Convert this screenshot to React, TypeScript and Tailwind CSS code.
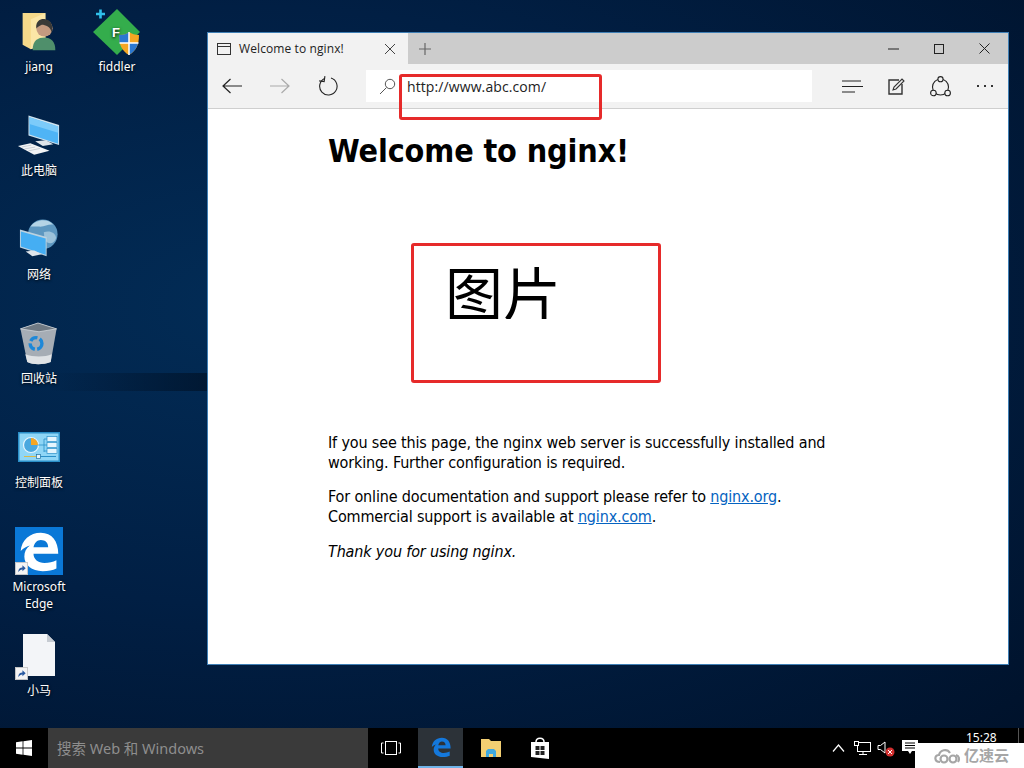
import React from 'react'

const FONT = "font-['Noto_Sans','Noto_Sans_CJK_SC',sans-serif]"

// Shortcut arrow badge used on Edge and 小马
const ShortcutBadge = () => (
  <svg width="13" height="13" viewBox="0 0 14 14" className="absolute left-0 bottom-0">
    <rect x="0.5" y="0.5" width="13" height="13" fill="#f4f4f4" stroke="#c8c8c8" />
    <path d="M3.5 11 C3.5 7.5 5.5 6 8 6 L8 3.5 L11.5 6.8 L8 10 L8 8 C6 8 5 9 3.5 11 Z" fill="#2a5aa0" />
  </svg>
)

const FolderUserIcon = () => (
  <svg width="36" height="40" viewBox="0 0 38 44">
    <path d="M1 1 H26 V34 L10 41 L1 36 Z" fill="#f5d98a" />
    <path d="M10 8 L26 1 V34 L10 41 Z" fill="#fbe6a6" />
    <path d="M12 42 C12 31 18 28 25 28 C32 28 37 32 37 42 Z" fill="#4f8f6b" />
    <circle cx="25" cy="18" r="9" fill="#c49a80" />
    <path d="M16 18 C15 8 23 7 26 8 C32 9 35 14 33 23 C32 16 26 14 22 14 C20 15 18 16 16 18 Z" fill="#3a3a38" />
  </svg>
)

const FiddlerIcon = () => (
  <svg width="50" height="48" viewBox="0 0 50 48">
    <path d="M4 6 H13 M8.5 1.5 V10.5" stroke="#2fc0ea" strokeWidth="2.6" />
    <path d="M25 1 L48 24 L25 47 L1 24 Z" fill="#34ad4c" />
    <text x="20" y="29" fontSize="13" fontWeight="700" fill="#fff" fontFamily="Liberation Sans">F</text>
    <path d="M27 27 C32 27 35 26 37 24 C40 26 43 27 47 27 C47 37 44 43 37 47 C30 43 27 37 27 27 Z" fill="#f5a623" />
    <path d="M27 27 C32 27 35 26 37 24 V35 H27.5 Z" fill="#2b78d0" />
    <path d="M37 35 H46 C45 40 42 44 37 47 Z" fill="#2b78d0" />
    <path d="M37 24 V47 M27.5 35 H46.5" stroke="#fff" strokeWidth="1.5" />
  </svg>
)

const ComputerIcon = () => (
  <svg width="44" height="43" viewBox="0 0 46 44">
    <path d="M12 0 L44 10 V31 L12 21 Z" fill="#cfe2ee" />
    <path d="M13 2 L43 11.5 V29.5 L13 20 Z" fill="#4fb4f5" />
    <path d="M13 2 L43 11.5 V18 L13 9 Z" fill="#7ccbfa" />
    <path d="M19 27 L30 26 L38 30 L27 32 Z" fill="#dfe5ea" />
    <path d="M1 32 L14 29 L34 37 L18 41 Z" fill="#f1f3f5" />
    <path d="M5 33 L15 31 M8 35 L19 33 M12 37 L24 34.5" stroke="#b4bcc4" strokeWidth="0.7" />
  </svg>
)

const NetworkIcon = () => (
  <svg width="42" height="40" viewBox="0 0 42 42">
    <circle cx="25" cy="16" r="15.5" fill="#5d97c0" />
    <path d="M12 8 C18 0 30 -1 36 6 C30 5 27 9 20 8 Z" fill="#b5d4e6" />
    <path d="M26 14 C32 12 38 14 39 20 C36 28 30 26 27 22 Z" fill="#9cc2da" />
    <path d="M1 11 L29 19 V39 L1 30 Z" fill="#bcd2df" />
    <path d="M2 13 L28 20.5 V37.5 L2 29 Z" fill="#45aef3" />
    <path d="M7 34 L16 33 L24 37 L14 39 Z" fill="#dfe5ea" />
  </svg>
)

const RecycleIcon = () => (
  <svg width="40" height="43" viewBox="0 0 40 44">
    <path d="M1 7 L19 1 L38 7 L32 41 C24 44 14 44 8 41 Z" fill="#a6adb5" />
    <path d="M1 7 L19 1 L38 7 L20 10 Z" fill="#6f7983" stroke="#d0d5da" strokeWidth="0.8" />
    <path d="M6 33 C14 36 26 36 33 33 L32 41 C24 44 14 44 8 41 Z" fill="#dfe2e5" />
    <circle cx="17" cy="22" r="6" fill="none" stroke="#1e88d8" strokeWidth="3.5" strokeDasharray="8 2.5" />
  </svg>
)

const ControlPanelIcon = () => (
  <svg width="42" height="30" viewBox="0 0 42 30">
    <rect width="42" height="30" fill="#2a8fc8" />
    <rect x="1.5" y="1.5" width="39" height="27" fill="#8fd6f6" />
    <circle cx="13" cy="13" r="7.5" fill="#4aa8df" stroke="#e8f6fd" strokeWidth="1.2" />
    <path d="M13 13 V6 A7 7 0 0 1 20 13 Z" fill="#f5a623" />
    <path d="M20 13 H26 M26 7 V20 M26 7 H29 M26 13 H29 M26 19 H29" stroke="#2a8fc8" strokeWidth="0.8" />
    <rect x="29" y="4.5" width="10" height="5" fill="#e4f5fd" stroke="#2a8fc8" strokeWidth="0.7" />
    <rect x="29" y="10.5" width="10" height="5" fill="#e4f5fd" stroke="#2a8fc8" strokeWidth="0.7" />
    <rect x="29" y="16.5" width="10" height="5" fill="#e4f5fd" stroke="#2a8fc8" strokeWidth="0.7" />
    <path d="M6 24.5 H19" stroke="#d8b94a" strokeWidth="1" />
    <path d="M19 24.5 H38" stroke="#2a8fc8" strokeWidth="1" />
    <rect x="18.5" y="22.5" width="4" height="4" fill="#e4f5fd" stroke="#1f6fa0" strokeWidth="0.7" />
  </svg>
)

const EdgeGlyph = ({ size, color }: { size: number; color: string }) => (
  <svg width={size} height={size} viewBox="0 0 48 48">
    <path
      fill={color}
      d="M4 24 C5 12 14 4 26 4 C38 4 45 13 45 27 H18 C18 33 23 37 30 37 C35 37 39 36 43 34 V43 C39 45 34 46 28 46 C16 46 8 39 8 30 C8 25 10 21 14 18 C11 19 7 21 4 24 Z M18 20 H34 C34 15 31 12 26 12 C22 12 19 15 18 20 Z"
    />
  </svg>
)

const EdgeDesktopIcon = () => (
  <div className="relative w-12 h-12 bg-[#0a78d7] flex items-center justify-center">
    <EdgeGlyph size={44} color="#ffffff" />
    <ShortcutBadge />
  </div>
)

const FileIcon = () => (
  <div className="relative w-10 h-[46px] mr-[8px]">
    <svg width="40" height="42" viewBox="0 0 40 42">
      <path d="M8 0 H32 L40 8 V42 H8 Z" fill="#f3f5f8" />
      <path d="M32 0 L40 8 H32 Z" fill="#c6cbd2" />
    </svg>
    <ShortcutBadge />
  </div>
)

const DesktopIcon = ({ className, gap, icon, label }: { className: string; gap: string; icon: React.ReactNode; label: React.ReactNode }) => (
  <div className={`absolute w-[76px] flex flex-col items-center text-white text-[12px] leading-[17px] text-center [text-shadow:0_1px_3px_#000] ${className}`}>
    <div className="flex items-end justify-center">{icon}</div>
    <div className={gap}>{label}</div>
  </div>
)

const BrowserWindow = () => (
  <div className="absolute left-[207px] top-[32px] w-[802px] h-[633px] border border-[#3f7fb5] bg-white flex flex-col">
    {/* tab strip */}
    <div className="h-[31px] bg-[#cccccc] flex items-center shrink-0">
      <div className="w-[200px] h-full bg-[#f2f2f2] flex items-center pl-[9px] pr-[12px]">
        <svg width="14" height="12" viewBox="0 0 14 12" fill="none" stroke="#333" strokeWidth="1">
          <rect x="0.5" y="0.5" width="13" height="11" />
          <path d="M0.5 3.5 H13.5" />
        </svg>
        <span className="ml-[8px] text-[12px] tracking-[0.1px] text-[#222] flex-1 font-['Open_Sans',sans-serif]">Welcome to nginx!</span>
        <svg width="12" height="12" viewBox="0 0 12 12" stroke="#444" strokeWidth="1">
          <path d="M1 1 L11 11 M11 1 L1 11" />
        </svg>
      </div>
      <svg className="ml-[11px]" width="12" height="12" viewBox="0 0 12 12" stroke="#666" strokeWidth="1.2">
        <path d="M6 0 V12 M0 6 H12" />
      </svg>
      <div className="ml-auto flex items-center h-full">
        <div className="w-[46px] flex justify-center">
          <svg width="11" height="2" viewBox="0 0 11 2"><path d="M0 1 H11" stroke="#222" /></svg>
        </div>
        <div className="w-[46px] flex justify-center">
          <svg width="10" height="10" viewBox="0 0 10 10" fill="none" stroke="#222"><rect x="0.5" y="0.5" width="9" height="9" /></svg>
        </div>
        <div className="w-[46px] flex justify-center pr-[2px]">
          <svg width="11" height="11" viewBox="0 0 11 11" stroke="#222"><path d="M0.5 0.5 L10.5 10.5 M10.5 0.5 L0.5 10.5" /></svg>
        </div>
      </div>
    </div>

    {/* toolbar */}
    <div className="h-[45px] bg-[#f2f2f2] border-b border-[#cfcfcf] flex items-center shrink-0">
      <svg className="ml-[14px]" width="20" height="16" viewBox="0 0 20 16" fill="none" stroke="#222" strokeWidth="1.2">
        <path d="M20 8 H1 M8.5 1 L1 8 L8.5 15" />
      </svg>
      <svg className="ml-[28px]" width="20" height="16" viewBox="0 0 20 16" fill="none" stroke="#aaa" strokeWidth="1.2">
        <path d="M0 8 H19 M11.5 1 L19 8 L11.5 15" />
      </svg>
      <svg className="ml-[28px]" width="20" height="20" viewBox="0 0 20 20" fill="none" stroke="#222" strokeWidth="1.1">
        <path d="M6.5 2.5 A8.7 8.7 0 1 0 13 2" />
        <path d="M6.5 0 V5.5 H1.5" transform="rotate(8 6 3)" />
      </svg>
      <div className="ml-[28px] w-[446px] h-[32px] bg-white flex items-center">
        <svg className="ml-[13px]" width="17" height="17" viewBox="0 0 17 17" fill="none" stroke="#555" strokeWidth="1">
          <circle cx="11" cy="6" r="4.7" />
          <path d="M7.5 9.5 L1 16" />
        </svg>
        <span className="ml-[11px] pt-px text-[14px] tracking-[0.1px] text-[#222] font-['Open_Sans',sans-serif]">http://www.abc.com/</span>
      </div>
      <svg className="ml-[30px]" width="21" height="13" viewBox="0 0 21 13" stroke="#222" strokeWidth="1.1">
        <path d="M0 1 H19 M0 6.5 H21 M0 12 H13" />
      </svg>
      <svg className="ml-[25px]" width="17" height="17" viewBox="0 0 17 17" fill="none" stroke="#333" strokeWidth="1.4">
        <path d="M14 6 V16 H1 V2 H11" />
        <path d="M5 12 L6 9 L14 1 L16 3 L8 11 Z" fill="#f2f2f2" strokeWidth="1.1" />
      </svg>
      <svg className="ml-[25px]" width="21" height="21" viewBox="0 0 21 21" fill="none" stroke="#222" strokeWidth="1.1">
        <circle cx="10.5" cy="11" r="8" />
        <circle cx="10.5" cy="3.2" r="2.6" fill="#f2f2f2" />
        <circle cx="3.4" cy="17" r="2.8" fill="#f2f2f2" />
        <circle cx="17.6" cy="17" r="2.8" fill="#f2f2f2" />
      </svg>
      <div className="ml-[26px] flex gap-[5px]">
        <div className="w-[2px] h-[2px] bg-[#333]" />
        <div className="w-[2px] h-[2px] bg-[#333]" />
        <div className="w-[2px] h-[2px] bg-[#333]" />
      </div>
    </div>

    {/* page */}
    <div className="flex-1 pl-[120px] pr-[178px] text-black text-[16px] leading-[20px] tracking-[-0.15px] font-['DejaVu_Sans_Condensed','DejaVu_Sans',sans-serif] [font-stretch:condensed]">
      <h1 className="text-[32px] leading-[40px] tracking-[-0.12px] font-bold mt-[22px]">Welcome to nginx!</h1>
      <div className="ml-[83px] mt-[72px] w-[250px] h-[140px] border-[3px] border-[#e62a2a] rounded-[3px] pl-[31px] pt-[13px]">
        {/* the reference crops the bottom of these glyphs */}
        <div className="h-[60px] overflow-hidden text-[58px] leading-[64px] tracking-normal font-['Noto_Sans_CJK_SC',sans-serif]">图片</div>
      </div>
      <p className="mt-[49px] pt-px">If you see this page, the nginx web server is successfully installed and working. Further configuration is required.</p>
      <p className="mt-[14px]">
        For online documentation and support please refer to <a className="text-[#0563c1] underline" href="#">nginx.org</a>.<br />
        Commercial support is available at <a className="text-[#0563c1] underline" href="#">nginx.com</a>.
      </p>
      <p className="mt-[15px] italic">Thank you for using nginx.</p>
    </div>

    {/* annotation over the address bar */}
    <div className="absolute left-[191px] top-[41px] w-[203px] h-[46px] border-[3px] border-[#e62a2a] rounded-[3px]" />
  </div>
)

const Taskbar = () => (
  <div className="relative h-10 bg-black flex items-center shrink-0">
    <div className="w-[48px] flex justify-center">
      <svg width="16" height="16" viewBox="0 0 16 16" fill="#fff">
        <path d="M0 2.2 L6.6 1.3 V7.5 H0 Z M7.4 1.2 L16 0 V7.5 H7.4 Z M0 8.5 H6.6 V14.7 L0 13.8 Z M7.4 8.5 H16 V16 L7.4 14.8 Z" />
      </svg>
    </div>
    <div className="w-[320px] h-full bg-[#3a3a3a] flex items-center pl-[9px] pt-px text-[14.5px] text-[#8e8e8e]">
      搜索 Web 和 Windows
    </div>
    <div className="w-[50px] flex justify-center pr-[4px]">
      <svg width="20" height="14" viewBox="0 0 20 14" fill="none" stroke="#fff" strokeWidth="1">
        <rect x="4.5" y="0.5" width="11" height="13" />
        <path d="M2.5 2 H0.5 V12 H2.5 M17.5 2 H19.5 V12 H17.5" />
      </svg>
    </div>
    <div className="w-[45px] h-full bg-[#2c3238] border-b-2 border-[#6fb3e8] flex items-center justify-center">
      <EdgeGlyph size={22} color="#1478dc" />
    </div>
    <div className="w-[56px] flex justify-center">
      <svg width="22" height="20" viewBox="0 0 22 20">
        <path d="M1 1 H9 L11 3 H21 V19 H1 Z" fill="#f3cf72" />
        <path d="M6 19 V13 L8 11 H14 L16 13 V19 H13 V16 H9 V19 Z" fill="#3fa9e0" />
      </svg>
    </div>
    <div className="w-[42px] flex justify-center">
      <svg width="22" height="24" viewBox="0 0 20 24">
        <path d="M6 6 C6 1 14 1 14 6" fill="none" stroke="#fff" strokeWidth="1.5" />
        <path d="M1 6 H19 V23 L1 21 Z" fill="#fff" />
        <path d="M5.5 10 H9.5 V14 H5.5 Z M10.5 10 H14.5 V14 H10.5 Z M5.5 15 H9.5 V19 H5.5 Z M10.5 15 H14.5 V19 H10.5 Z" fill="#222" />
      </svg>
    </div>

    {/* tray */}
    <svg className="absolute left-[832px] top-[16px]" width="13" height="8" viewBox="0 0 13 8" fill="none" stroke="#fff" strokeWidth="1.2">
      <path d="M1 7.5 L6.5 1 L12 7.5" />
    </svg>
    <svg className="absolute left-[854px] top-[13px]" width="17" height="14" viewBox="0 0 17 14" fill="none" stroke="#fff" strokeWidth="1">
      <rect x="3.5" y="1.5" width="13" height="9" />
      <rect x="0.5" y="0.5" width="4" height="4" fill="#000" />
      <path d="M9 10.5 V13.5 M5 13.5 H13" />
    </svg>
    <svg className="absolute left-[877px] top-[13px]" width="18" height="16" viewBox="0 0 18 16">
      <path d="M1 4.5 H3.5 L8 1 V12 L3.5 8.5 H1 Z" fill="none" stroke="#fff" />
      <circle cx="13" cy="11" r="4.5" fill="#d32f2f" />
      <path d="M11 9 L15 13 M15 9 L11 13" stroke="#fff" />
    </svg>
    <svg className="absolute left-[902px] top-[12px]" width="16" height="15" viewBox="0 0 16 15">
      <path d="M0 0 H16 V11 H10 L8 14 L6 11 H0 Z" fill="#fff" />
      <path d="M3 3 H13 M3 5.5 H13 M3 8 H13" stroke="#000" />
    </svg>
    <div className="absolute left-[966px] top-[5px] h-[10px] text-[12px] leading-[10px] text-white">15:28</div>
    <div className="absolute left-[1018px] top-0 h-[15px] w-px bg-[#555]" />

    {/* watermark */}
    <div className="absolute right-0 bottom-0 w-[109px] h-[25px] bg-white flex items-center pl-[18px] gap-[3px]">
      <svg width="28" height="18" viewBox="0 0 28 18" fill="none" stroke="#a6a6a6" strokeWidth="2.2">
        <path d="M7 15 C1 15 1 8 6 8 C7 3 14 1 17 6" />
        <circle cx="11" cy="12" r="3.5" />
        <circle cx="20" cy="12" r="3.5" />
        <path d="M23 8 C26 9 27 12 25 15" />
      </svg>
      <span className="text-[15px] font-bold text-[#a6a6a6]">亿速云</span>
    </div>
  </div>
)

export default function App() {
  return (
    <div className={`w-[1024px] h-[768px] overflow-hidden flex flex-col ${FONT}`}>
      <div className="relative flex-1 bg-[radial-gradient(ellipse_at_25%_42%,#022c56_0%,#011f44_50%,#00122b_100%)]">
        {/* dark band behind 回收站 */}
        <div className="absolute left-[50px] top-[373px] w-[157px] h-[18px] bg-gradient-to-r from-transparent to-[#001126]/70" />

        <DesktopIcon className="left-[1px] top-[12px]" gap="mt-[6px]" icon={<FolderUserIcon />} label="jiang" />
        <DesktopIcon className="left-[79px] top-[8px]" gap="mt-[2px]" icon={<FiddlerIcon />} label="fiddler" />
        <DesktopIcon className="left-[1px] top-[115px]" gap="mt-[4px]" icon={<ComputerIcon />} label="此电脑" />
        <DesktopIcon className="left-[1px] top-[219px]" gap="mt-[7px]" icon={<NetworkIcon />} label="网络" />
        <DesktopIcon className="left-[1px] top-[322px]" gap="mt-[5px]" icon={<RecycleIcon />} label="回收站" />
        <DesktopIcon className="left-[1px] top-[432px]" gap="mt-[12px]" icon={<ControlPanelIcon />} label="控制面板" />
        <DesktopIcon className="left-[1px] top-[527px]" gap="mt-[3px]" icon={<EdgeDesktopIcon />} label={<>Microsoft<br />Edge</>} />
        <DesktopIcon className="left-[1px] top-[634px]" gap="mt-[2px]" icon={<FileIcon />} label="小马" />

        <BrowserWindow />
      </div>
      <Taskbar />
    </div>
  )
}
